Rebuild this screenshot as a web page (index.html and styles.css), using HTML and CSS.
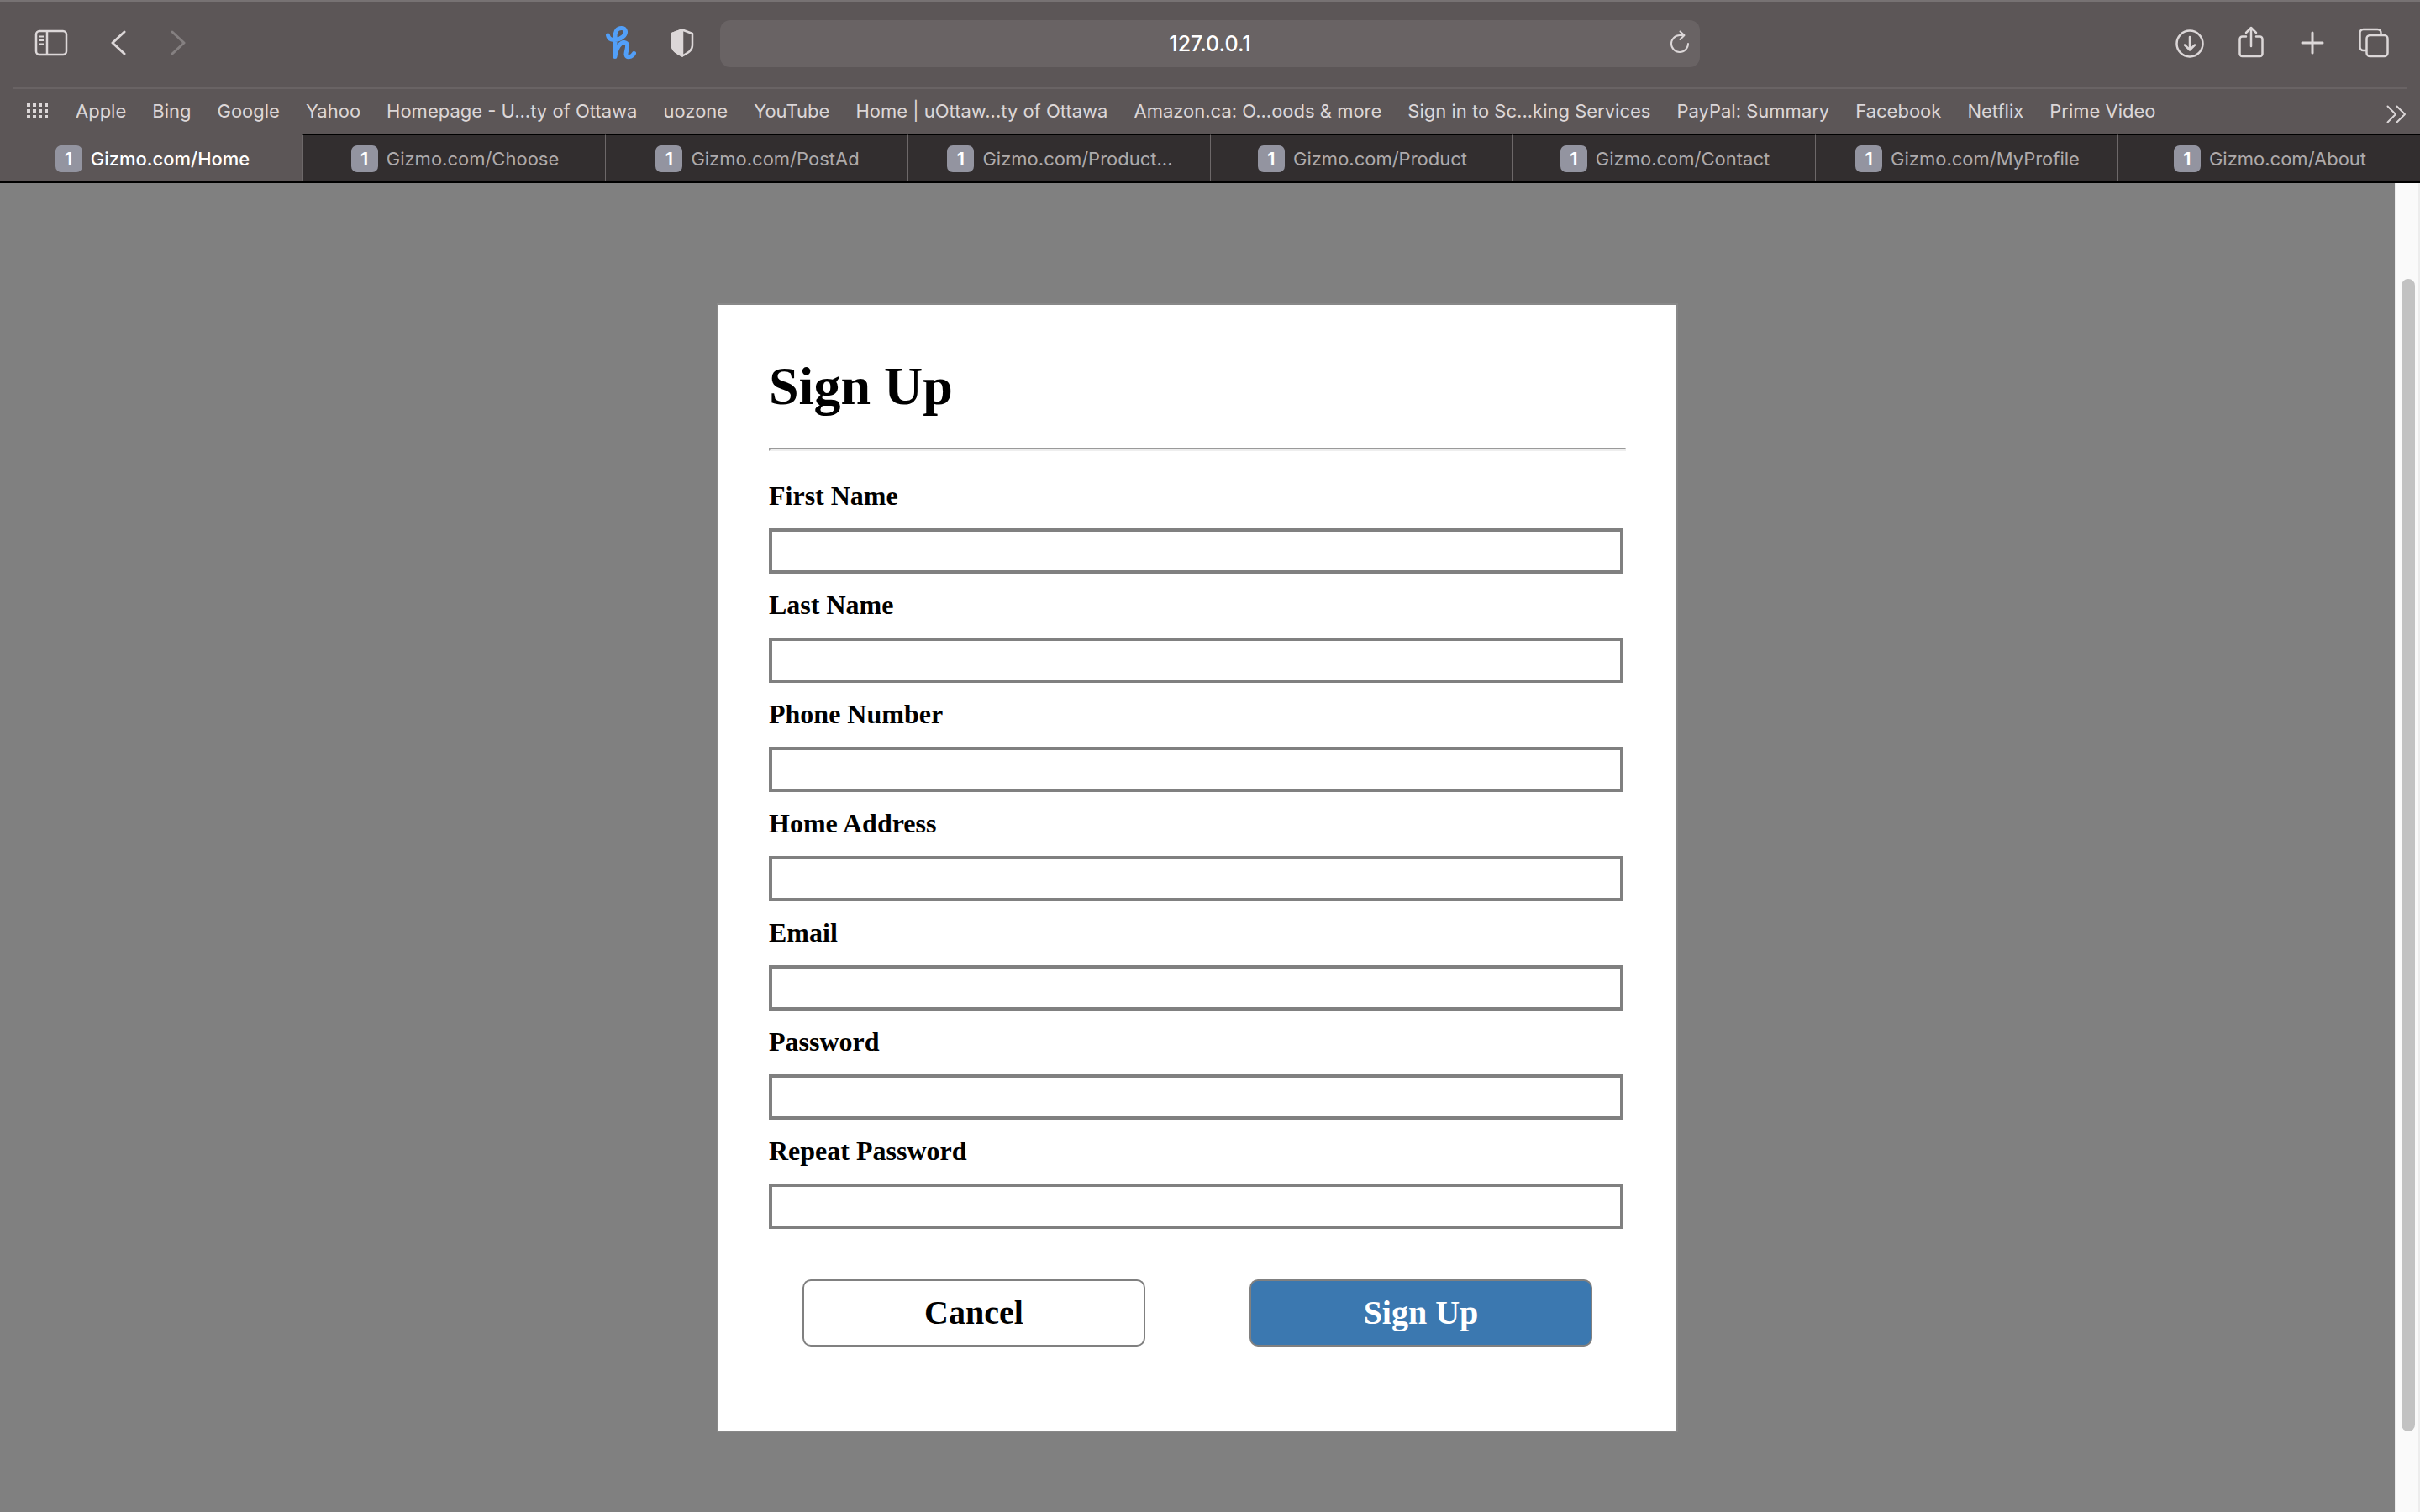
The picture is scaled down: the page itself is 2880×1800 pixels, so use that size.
FILE: index.html
```html
<!DOCTYPE html>
<html lang="en">
<head>
<meta charset="utf-8">
<title>Gizmo.com/Home</title>
<link rel="stylesheet" href="styles.css">
</head>
<body class="browser">
<header class="chrome">
  <div class="toolbar">
    <div class="tools tools-left">
      <button class="tool sidebar" aria-label="Show sidebar"><svg width="40" height="32" viewBox="0 0 40 32" fill="none" stroke="currentColor" stroke-width="2.500"><rect x="2" y="2" width="36" height="28" rx="4"/><path d="M15 2v28"/><path d="M6 8.500h5M6 13h5M6 17.500h5" stroke-width="2"/></svg></button>
      <button class="tool back" aria-label="Back"><svg width="18" height="30" viewBox="0 0 18 30" fill="none" stroke="currentColor" stroke-width="3" stroke-linecap="round" stroke-linejoin="round"><path d="M16 2L2 15l14 13"/></svg></button>
      <button class="tool forward" aria-label="Forward" disabled><svg width="18" height="30" viewBox="0 0 18 30" fill="none" stroke="currentColor" stroke-width="3" stroke-linecap="round" stroke-linejoin="round"><path d="M2 2l14 13L2 28"/></svg></button>
      <button class="tool honey" aria-label="Honey"><svg width="36" height="40" viewBox="0 0 36 40" fill="none" stroke="currentColor" stroke-width="5" stroke-linecap="round" stroke-linejoin="round"><path d="M2.500 11C3.500 18 14 18 20 13C26 8 23.500 2.500 18.500 2.500C12.500 2.500 11 7 11 14V36.500C12 27 17 19 22 19.500C29 20.500 23.500 30 24 34C25 38.500 31 37 33.500 32.500"/></svg></button>
      <button class="tool shield" aria-label="Privacy report"><svg width="28" height="34" viewBox="0 0 28 34" fill="none" stroke="currentColor" stroke-width="2.500" stroke-linejoin="round"><path d="M14 1.500L26 6v14c0 6-5 9-12 12.500C7 29 2 26 2 20V6z"/><path d="M14 1.500v31C7 29 2 26 2 20V6z" fill="currentColor"/></svg></button>
    </div>
    <div class="address">
      <input class="address-input" type="text" value="127.0.0.1" aria-label="Address">
      <button class="tool reload" aria-label="Reload"><svg width="24" height="28" viewBox="0 0 24 28" fill="none" stroke="currentColor" stroke-width="2" stroke-linecap="round" stroke-linejoin="round"><path d="M22 16a10 10 0 1 1-10-10h5M12.500 1.500L17.500 6l-5 5"/></svg></button>
    </div>
    <div class="tools tools-right">
      <button class="tool" aria-label="Downloads"><svg width="36" height="40" viewBox="0 0 36 40" fill="none" stroke="currentColor" stroke-width="2.500" stroke-linecap="round" stroke-linejoin="round"><circle cx="18" cy="21" r="15.500"/><path d="M18 13v15M12 22.500l6 6 6-6"/></svg></button>
      <button class="tool" aria-label="Share"><svg width="36" height="40" viewBox="0 0 36 40" fill="none" stroke="currentColor" stroke-width="2.500" stroke-linecap="round" stroke-linejoin="round"><path d="M12 12.500H7.500a3 3 0 0 0-3 3V33a3 3 0 0 0 3 3h21a3 3 0 0 0 3-3V15.500a3 3 0 0 0-3-3H24M18 24V2.500M12 8l6-6 6 6"/></svg></button>
      <button class="tool" aria-label="New tab"><svg width="36" height="40" viewBox="0 0 36 40" fill="none" stroke="currentColor" stroke-width="3" stroke-linecap="round"><path d="M18 8v24M6 20h24"/></svg></button>
      <button class="tool" aria-label="Tab overview"><svg width="36" height="40" viewBox="0 0 36 40" fill="none" stroke="currentColor" stroke-width="2.500" stroke-linejoin="round"><path d="M9 29H5.500a4 4 0 0 1-4-4V8a4 4 0 0 1 4-4h17a4 4 0 0 1 4 4v3"/><rect x="9.500" y="11" width="25" height="25" rx="4"/></svg></button>
    </div>
  </div>
  <nav class="bookmarks" aria-label="Bookmarks">
    <button class="tool grid" aria-label="Top sites"><svg width="28" height="20" viewBox="0 0 28 20" fill="currentColor"><path d="M1 1h4v4H1zM8 1h4v4H8zM15 1h4v4h-4zM22 1h4v4h-4zM1 8h4v4H1zM8 8h4v4H8zM15 8h4v4h-4zM22 8h4v4h-4zM1 15h4v4H1zM8 15h4v4H8zM15 15h4v4h-4zM22 15h4v4h-4z"/></svg></button>
    <a href="#">Apple</a><a href="#">Bing</a><a href="#">Google</a><a href="#">Yahoo</a><a href="#">Homepage - U...ty of Ottawa</a><a href="#">uozone</a><a href="#">YouTube</a><a href="#">Home | uOttaw...ty of Ottawa</a><a href="#">Amazon.ca: O...oods &amp; more</a><a href="#">Sign in to Sc...king Services</a><a href="#">PayPal: Summary</a><a href="#">Facebook</a><a href="#">Netflix</a><a href="#">Prime Video</a>
    <button class="tool more" aria-label="More bookmarks"><svg width="24" height="22" viewBox="0 0 24 22" fill="none" stroke="currentColor" stroke-width="2" stroke-linecap="round" stroke-linejoin="round"><path d="M1.500 1.500L11 11l-9.500 9.500M12.500 1.500L22 11l-9.500 9.500"/></svg></button>
  </nav>
  <nav class="tabs" aria-label="Tabs">
    <a class="tab active" href="#"><span class="badge">1</span>Gizmo.com/Home</a>
    <a class="tab" href="#"><span class="badge">1</span>Gizmo.com/Choose</a>
    <a class="tab" href="#"><span class="badge">1</span>Gizmo.com/PostAd</a>
    <a class="tab" href="#"><span class="badge">1</span>Gizmo.com/Product...</a>
    <a class="tab" href="#"><span class="badge">1</span>Gizmo.com/Product</a>
    <a class="tab" href="#"><span class="badge">1</span>Gizmo.com/Contact</a>
    <a class="tab" href="#"><span class="badge">1</span>Gizmo.com/MyProfile</a>
    <a class="tab" href="#"><span class="badge">1</span>Gizmo.com/About</a>
  </nav>
</header>
<div class="viewport">
  <main class="page">
    <form class="card">
      <h1 class="title">Sign Up</h1>
      <hr class="rule">
      <label class="label" for="first">First Name</label><input class="field" id="first" type="text">
      <label class="label" for="last">Last Name</label><input class="field" id="last" type="text">
      <label class="label" for="phone">Phone Number</label><input class="field" id="phone" type="tel">
      <label class="label" for="home">Home Address</label><input class="field" id="home" type="text">
      <label class="label" for="email">Email</label><input class="field" id="email" type="email">
      <label class="label" for="password">Password</label><input class="field" id="password" type="password">
      <label class="label" for="repeat">Repeat Password</label><input class="field" id="repeat" type="password">
      <div class="actions">
        <button class="action" type="button">Cancel</button>
        <button class="action primary" type="submit">Sign Up</button>
      </div>
    </form>
  </main>
  <div class="scrollbar" aria-hidden="true"><div class="thumb"></div></div>
</div>
</body>
</html>
```
FILE: styles.css
```css
* {
  box-sizing: border-box;
}

.browser {
  display: flex;
  flex-direction: column;
  min-height: 100vh;
  margin: 0;
  font-family: Inter, "Liberation Sans", sans-serif;
  font-size: 22px;
}

/* Browser chrome */
.chrome {
  background: #5c5657;
  color: #dcd7d8;
  border-top: 2px solid #777273;
  border-bottom: 2px solid #000;
}

.toolbar {
  display: grid;
  grid-template-columns: 857fr 1166fr 857fr;
  align-items: center;
  height: 102px;
  padding-bottom: 2px;
}

.tools {
  display: flex;
  align-items: center;
  padding-bottom: 2px;
}

.tools-left {
  padding-left: 41px;
  padding-right: 31px;
}

.tools-right {
  justify-content: flex-end;
  gap: 37px;
  padding-right: 37px;
}

.tool {
  display: flex;
  padding: 0;
  border: 0;
  background: none;
  color: inherit;
}

.back {
  margin-left: 51px;
}

.forward {
  margin-left: 53px;
  color: #858081;
}

.honey {
  margin-left: auto;
  color: #529ff8;
}

.shield {
  margin-left: 41px;
}

.address {
  position: relative;
  display: flex;
}

.address-input {
  width: 100%;
  height: 56px;
  padding: 0 40px;
  border: 0;
  border-radius: 12px;
  background: #696364;
  color: #fff;
  font: 500 25px Inter, sans-serif;
  text-align: center;
}

.reload {
  position: absolute;
  right: 12px;
  top: 12px;
}

.bookmarks {
  display: flex;
  align-items: center;
  gap: 31px;
  height: 56px;
  margin: 0 16px;
  padding-left: 15px;
  padding-bottom: 2px;
  border-top: 2px solid #696364;
  white-space: nowrap;
}

.bookmarks a {
  color: inherit;
  text-decoration: none;
}

.more {
  margin-left: auto;
  padding-top: 8px;
}

.tabs {
  display: grid;
  grid-template-columns: repeat(8, 1fr);
}

.tab {
  display: flex;
  align-items: center;
  justify-content: center;
  gap: 10px;
  height: 56px;
  padding-left: 2px;
  border-top: 1px solid #000;
  border-left: 1px solid #6d6869;
  background: #322e2f;
  color: #aeaaab;
  text-decoration: none;
  white-space: nowrap;
}

.tab.active {
  border-color: transparent;
  background: none;
  color: #fff;
  font-weight: 500;
}

.badge {
  width: 32px;
  border-radius: 7px;
  background: #9394a0;
  color: #fff;
  font-weight: 600;
  line-height: 32px;
  text-align: center;
}

/* Web page */
.viewport {
  display: flex;
  flex: 1;
}

.page {
  flex: 1;
  padding: 143px 0 95px;
  background: #808080;
  font-family: "Liberation Serif", serif;
}

.card {
  display: flex;
  flex-direction: column;
  width: calc(40% + 4px);
  min-width: 720px;
  min-height: 1344px;
  margin: 0 auto;
  padding: 60px;
  border: 2px solid #888;
  background: #fff;
}

.title {
  margin: 0;
  color: #000;
  font-size: 64px;
  line-height: 74px;
}

.rule {
  width: 100%;
  margin: 36px 0;
  border: 2px inset #eee;
}

.label {
  color: #000;
  font-size: 32px;
  font-weight: 700;
  line-height: 34px;
}

.field {
  height: 54px;
  margin: 22px 3px 20px 0;
  padding: 0 8px;
  border: 4px solid #808080;
  background: #fff;
  font-size: 28px;
}

.actions {
  display: flex;
  justify-content: space-between;
  margin-top: 40px;
  padding: 0 40px;
}

.action {
  width: 408px;
  height: 80px;
  padding: 0 0 2px;
  border: 2px solid #808080;
  border-radius: 10px;
  background: #fff;
  color: #000;
  font: 700 40px "Liberation Serif", serif;
}

.action.primary {
  background: #3b78b0;
  color: #fff;
}

.scrollbar {
  display: flex;
  justify-content: center;
  width: 30px;
  padding: 114px 0 96px 2px;
  border: solid #ededed;
  border-width: 0 2px;
  background: #fafafa;
}

.thumb {
  width: 16px;
  border-radius: 8px;
  background: #c2c2c2;
}
```
